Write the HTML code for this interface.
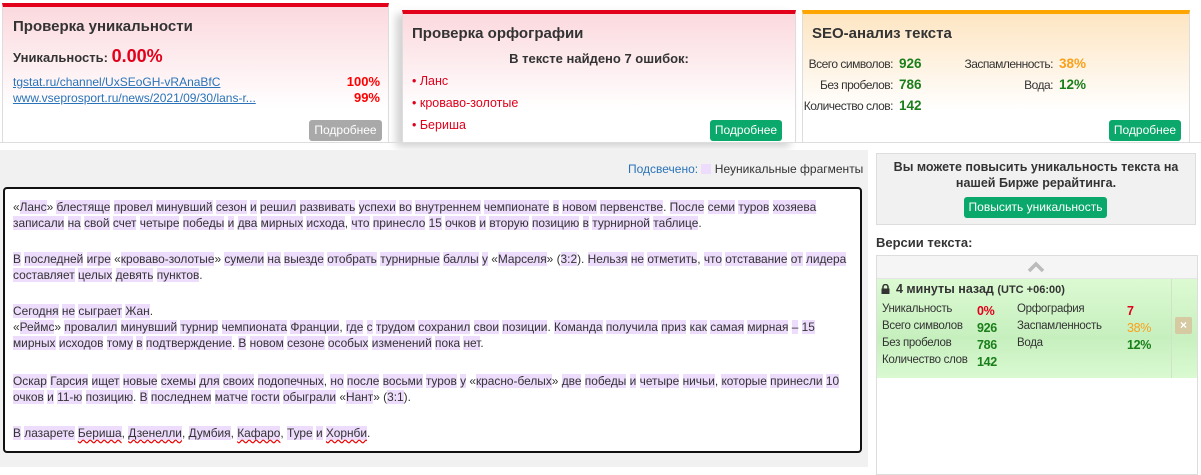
<!DOCTYPE html>
<html><head><meta charset="utf-8">
<style>
*{margin:0;padding:0;box-sizing:border-box}
body{width:1201px;height:467px;position:relative;background:#fff;font-family:"Liberation Sans",Tahoma,sans-serif;color:#333;overflow:hidden;font-size:13px}
.a{position:absolute}
.panel{position:absolute;border-left:1px solid #ddd;border-right:1px solid #ddd}
.t{font-size:15px;font-weight:bold;color:#333}
.btn{position:absolute;color:#fff;font-size:12px;text-align:center;line-height:21px;border-radius:3px;height:21px}
.g{background:#0aa86a}
.r{color:#e0001b}
.gr{color:#1a7f1a;font-weight:bold}
.or{color:#f9a11b;font-weight:bold}
.lbl{position:absolute;text-align:right;width:120px;font-size:12px;letter-spacing:-0.5px}
.val{position:absolute;font-weight:bold;font-size:13.5px}
#txt{position:absolute;left:3px;top:187px;width:859px;height:266px;border:2px solid #111;border-radius:4px;background:#fff;padding:10px 8px 0 8px;font-size:11.9px;line-height:16px;color:#333}
#txt p{margin-bottom:20px;white-space:nowrap}
#txt span.w{background:#eddcfc}
.sp{text-decoration:underline wavy #e00;text-underline-offset:2px}
.vr{position:absolute;font-size:11.5px;letter-spacing:-0.3px}
</style></head><body>

<!-- panel 1 -->
<div class="panel" style="left:2px;top:3px;width:387px;height:140px;background:linear-gradient(#fbd9de,#fff 75%);border-top:4px solid #e2001a">
  <div class="a t" style="left:10px;top:11px">Проверка уникальности</div>
  <div class="a" style="left:10px;top:39px;font-weight:bold;font-size:13px">Уникальность: <span style="color:#e2001a;font-size:18px">0.00%</span></div>
  <div class="a" style="left:10px;top:67px;font-size:12px;color:#2a73b8;text-decoration:underline;line-height:16px">tgstat.ru/channel/UxSEoGH-vRAnaBfC<br>www.vseprosport.ru/news/2021/09/30/lans-r...</div>
  <div class="a" style="right:8px;top:67px;font-size:13px;font-weight:bold;color:#f00;text-align:right;line-height:16px">100%<br>99%</div>
  <div class="btn" style="left:306px;top:113px;width:73px;background:#a9a9a9">Подробнее</div>
</div>

<!-- panel 2 -->
<div class="panel" style="left:402px;top:10px;width:394px;height:133px;background:linear-gradient(#fbd9de,#fff 75%);border-top:4px solid #e2001a;box-shadow:-6px 4px 8px rgba(0,0,0,.18)">
  <div class="a t" style="left:9px;top:11px">Проверка орфографии</div>
  <div class="a" style="left:0;width:392px;text-align:center;top:37px;font-weight:bold;font-size:13px">В тексте найдено 7 ошибок:</div>
  <div class="a r" style="left:9px;top:56px;font-size:12.5px;line-height:22px">• Ланс<br>• кроваво-золотые<br>• Бериша</div>
  <div class="btn g" style="left:307px;top:106px;width:72px">Подробнее</div>
</div>

<!-- panel 3 -->
<div class="panel" style="left:802px;top:10px;width:388px;height:133px;background:linear-gradient(#fde5c2,#fff 75%);border-top:4px solid #ffa500">
  <div class="a t" style="left:9px;top:11px">SEO-анализ текста</div>
  <div class="lbl" style="left:-30px;top:43px">Всего символов:</div><div class="val gr" style="left:96px;top:42px">926</div>
  <div class="lbl" style="left:-30px;top:64px">Без пробелов:</div><div class="val gr" style="left:96px;top:63px">786</div>
  <div class="lbl" style="left:-30px;top:85px">Количество слов:</div><div class="val gr" style="left:96px;top:84px">142</div>
  <div class="lbl" style="left:130px;top:43px">Заспамленность:</div><div class="val or" style="left:256px;top:42px">38%</div>
  <div class="lbl" style="left:130px;top:64px">Вода:</div><div class="val gr" style="left:256px;top:63px">12%</div>
  <div class="btn g" style="left:306px;top:106px;width:72px">Подробнее</div>
</div>
<div class="a" style="left:0;top:142px;width:1201px;height:1px;background:#ddd"></div>

<!-- left area -->
<div class="a" style="left:0;top:150px;width:868px;height:317px;background:#f1f1f1"></div>
<div class="a" style="left:628px;top:162px;font-size:12px"><span style="color:#2a73b8">Подсвечено:</span> <span style="display:inline-block;width:10px;height:10px;background:#eddcfc;vertical-align:-1px"></span> Неуникальные фрагменты</div>

<div id="txt">
<p>«Ланс» блестяще провел минувший сезон и решил развивать успехи во внутреннем чемпионате в новом первенстве. После семи туров хозяева<br>записали на свой счет четыре победы и два мирных исхода, что принесло 15 очков и вторую позицию в турнирной таблице.</p>
<p>В последней игре «кроваво-золотые» сумели на выезде отобрать турнирные баллы у «Марселя» (3:2). Нельзя не отметить, что отставание от лидера<br>составляет целых девять пунктов.</p>
<p style="margin-bottom:22px">Сегодня не сыграет Жан.<br>«Реймс» провалил минувший турнир чемпионата Франции, где с трудом сохранил свои позиции. Команда получила приз как самая мирная – 15<br>мирных исходов тому в подтверждение. В новом сезоне особых изменений пока нет.</p>
<p>Оскар Гарсия ищет новые схемы для своих подопечных, но после восьми туров у «красно-белых» две победы и четыре ничьи, которые принесли 10<br>очков и 11-ю позицию. В последнем матче гости обыграли «Нант» (3:1).</p>
<p>В лазарете Бериша, Дзенелли, Думбия, Кафаро, Туре и Хорнби.</p>
</div>

<!-- right column -->
<div class="a" style="left:876px;top:153px;width:320px;height:72px;background:#f1f1f1;border:1px solid #ddd;text-align:center;font-weight:bold;font-size:12.5px;line-height:16px;padding-top:5px">Вы можете повысить уникальность текста на<br>нашей Бирже рерайтинга.</div>
<div class="btn g" style="left:964px;top:197px;width:143px;font-size:12px">Повысить уникальность</div>
<div class="a" style="left:876px;top:235px;font-weight:bold;font-size:13px">Версии текста:</div>
<div class="a" style="left:876px;top:255px;width:322px;height:220px;border:1px solid #ddd;background:#fff"></div>
<div class="a" style="left:877px;top:256px;width:320px;height:23px;background:#f5f5f5;border-bottom:1px solid #e5e5e5"></div>
<svg class="a" style="left:1027px;top:261px" width="18" height="12"><path d="M2 10 L9 3 L16 10" stroke="#bbb" stroke-width="3.5" fill="none"/></svg>
<div class="a" style="left:877px;top:279px;width:295px;height:99px;background:linear-gradient(#dcfad2,#c6efbe 60%,#dafad2);border-right:1px solid #cde5c6"></div>
<div class="a" style="left:1172px;top:279px;width:25px;height:99px;background:linear-gradient(#dcfad2,#c9f0c0 60%,#dafad2)"></div>
<div class="a" style="left:1175px;top:317px;width:17px;height:17px;background:#d6caa2;border-radius:2px;color:#fff;font-size:12px;text-align:center;line-height:17px;font-weight:bold">×</div>
<svg class="a" style="left:881px;top:284px" width="9" height="10"><path d="M2 5 V3 A2.5 2.5 0 0 1 7 3 V5" stroke="#333" stroke-width="1.5" fill="none"/><rect x="0.5" y="4.5" width="8" height="5.5" fill="#333"/></svg>
<div class="a" style="left:896px;top:282px;font-weight:bold;font-size:12.5px">4 минуты назад <span style="font-size:11px">(UTC +06:00)</span></div>
<div class="vr" style="left:882px;top:303px">Уникальность</div><div class="vr" style="left:977px;top:304px;color:#e2001a;font-weight:bold;font-size:12.5px">0%</div>
<div class="vr" style="left:882px;top:320px">Всего символов</div><div class="vr gr" style="left:977px;top:321px;font-size:12.5px">926</div>
<div class="vr" style="left:882px;top:337px">Без пробелов</div><div class="vr gr" style="left:977px;top:338px;font-size:12.5px">786</div>
<div class="vr" style="left:882px;top:354px">Количество слов</div><div class="vr gr" style="left:977px;top:355px;font-size:12.5px">142</div>
<div class="vr" style="left:1017px;top:303px">Орфография</div><div class="vr" style="left:1127px;top:304px;color:#e2001a;font-weight:bold;font-size:12.5px">7</div>
<div class="vr" style="left:1017px;top:320px">Заспамленность</div><div class="vr or" style="left:1127px;top:321px;font-size:12.5px;font-weight:normal">38%</div>
<div class="vr" style="left:1017px;top:337px">Вода</div><div class="vr gr" style="left:1127px;top:338px;font-size:12.5px">12%</div>

<script>
(function(){
  var sp={"Бериша":1,"Дзенелли":1,"Кафаро":1,"Хорнби":1};
  var ps=document.querySelectorAll('#txt p');
  ps.forEach(function(p){
    var lines=p.innerHTML.split('<br>');
    p.innerHTML=lines.map(function(l){
      return l.split(' ').map(function(w){
        var m=w.match(/^([«(]?)(.*?)([».,:)]*)$/);
        var core=m[2];
        var cls=sp[core]?'w sp':'w';
        return m[1]+'<span class="'+cls+'">'+core+'</span>'+m[3];
      }).join(' ');
    }).join('<br>');
  });
})();
</script>
</body></html>
